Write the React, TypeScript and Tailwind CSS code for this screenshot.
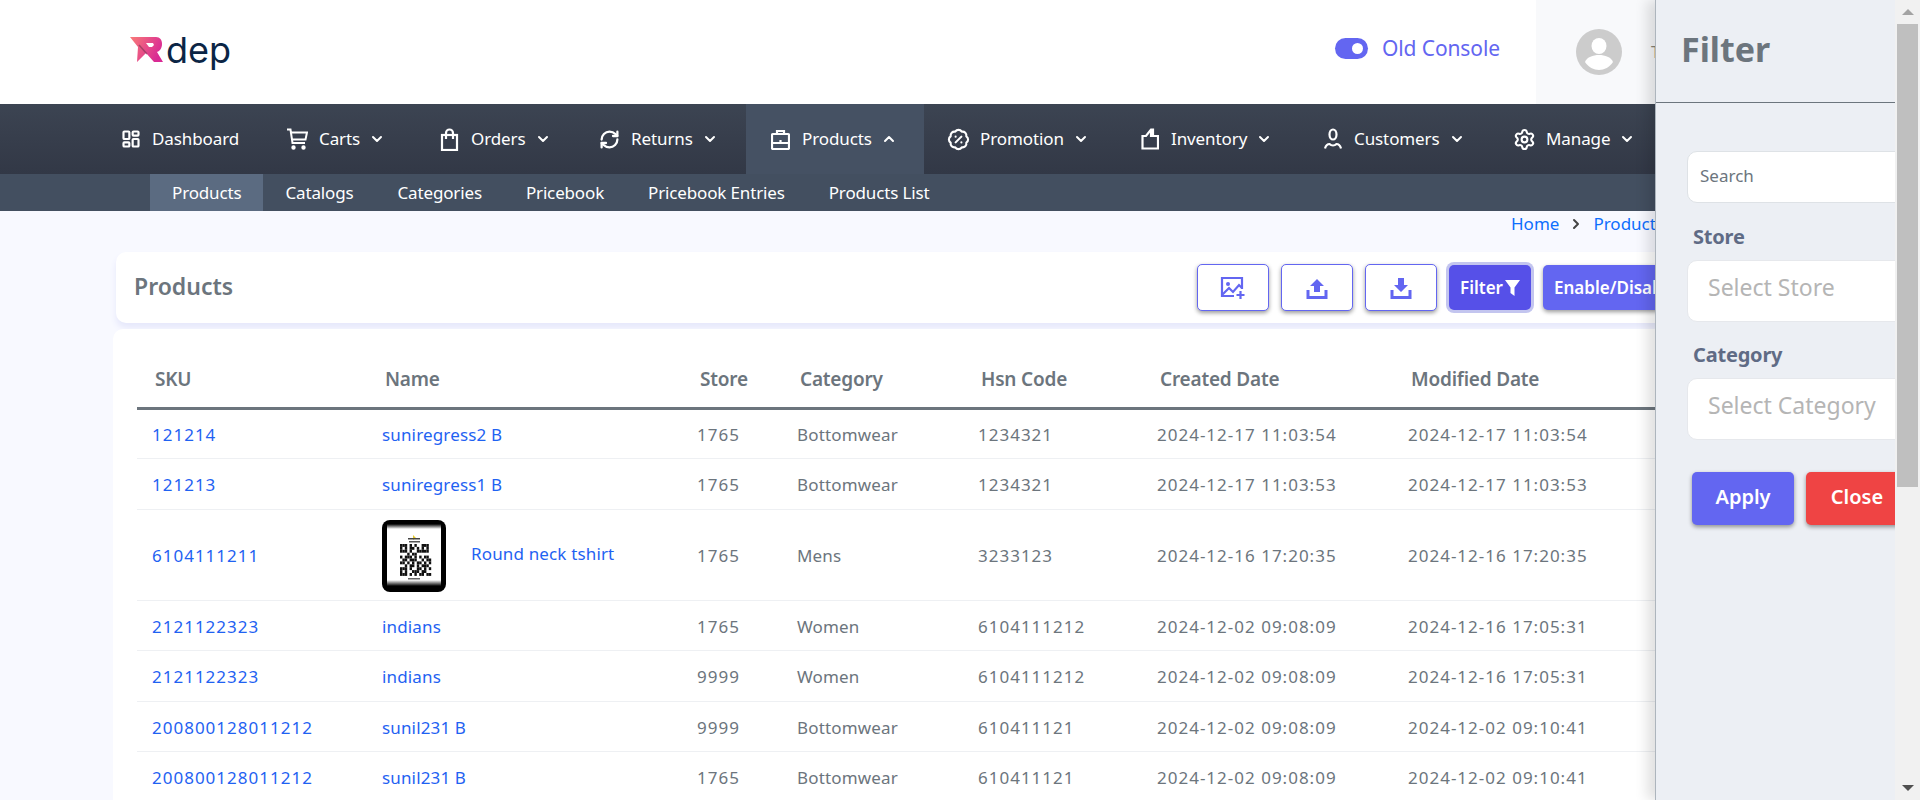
import { BadgePercent, ChevronDown, ChevronRight, ChevronUp, LayoutDashboard, RefreshCw, Settings } from "lucide-react";
import type { ReactNode } from "react";

const CartIcon = () => (
  <svg width="21" height="22" viewBox="0 0 21 22" fill="none" stroke="currentColor" strokeWidth="2">
    <path d="M0 1.500h3.500l2 13.500h12.500" />
    <path d="M4 4.500h16l-1.500 7H5" />
    <circle cx="6.500" cy="19.500" r="1.200" fill="currentColor" />
    <circle cx="16.500" cy="19.500" r="1.200" fill="currentColor" />
  </svg>
);

const BagIcon = () => (
  <svg width="19" height="23" viewBox="0 0 19 23" fill="none" stroke="currentColor" strokeWidth="2.200">
    <rect x="2" y="7" width="15" height="15" />
    <path d="M6 11V5a3.500 3.500 0 0 1 7 0v6" />
  </svg>
);

const CaseIcon = () => (
  <svg width="19" height="21" viewBox="0 0 19 21" fill="none" stroke="currentColor" strokeWidth="2.200">
    <rect x="1" y="5" width="17" height="15" rx="1" />
    <path d="M6 5V2h7v3M1 14h17M9.500 11v2" />
  </svg>
);

const InventoryIcon = () => (
  <svg width="18" height="22" viewBox="0 0 18 22" fill="none" stroke="currentColor" strokeWidth="2.200">
    <path d="M1.500 20.500V8h3.500l5-6.500 2 0V8h5v12.500z" />
    <path d="M10 2v7" />
  </svg>
);

const UserIcon = () => (
  <svg width="18" height="22" viewBox="0 0 18 22" fill="none" stroke="currentColor" strokeWidth="2.200">
    <ellipse cx="9" cy="6.500" rx="3.500" ry="5" />
    <path d="M1 20.500c1-3.500 3-4.500 4.500-4.500 1 1 2 1.500 3.500 1.500s2.500-.5 3.500-1.500c1.500 0 3.500 1 4.500 4.500" />
  </svg>
);

const ImageAddIcon = () => (
  <svg width="26" height="24" viewBox="0 0 26 24" fill="none" stroke="#6366f1" strokeWidth="2.200">
    <path d="M14 20H2V2h20v11" />
    <circle cx="8" cy="8" r="2" fill="#6366f1" stroke="none" />
    <path d="M2 19l7-7 4 4 6-7 3 3" />
    <path d="M20.500 15v8M16.500 19h8" />
  </svg>
);

const UploadIcon = () => (
  <svg width="24" height="24" viewBox="0 0 24 24" fill="#6366f1">
    <path d="M12 3l7 7h-4v6H9v-6H5z" />
    <path d="M1.500 14h3v6h15v-6h3v9h-21z" />
  </svg>
);

const DownloadIcon = () => (
  <svg width="24" height="24" viewBox="0 0 24 24" fill="#6366f1">
    <path d="M9 2h6v7h4l-7 7-7-7h4z" />
    <path d="M1.500 14h3v6h15v-6h3v9h-21z" />
  </svg>
);

const FunnelIcon = () => (
  <svg width="15" height="16" viewBox="0 0 15 16" fill="#fff">
    <path d="M0 0h15L9.500 7.500V16L5.500 13V7.500z" />
  </svg>
);

const navItems: { label: string; icon: ReactNode; width: string; chevron?: boolean; active?: boolean }[] = [
  { label: "Dashboard", icon: <LayoutDashboard size={20} strokeWidth={2.6} />, width: "w-[167px]" },
  { label: "Carts", icon: <CartIcon />, width: "w-[152px]", chevron: true },
  { label: "Orders", icon: <BagIcon />, width: "w-[160px]", chevron: true },
  { label: "Returns", icon: <RefreshCw size={21} strokeWidth={2.6} />, width: "w-[171px]", chevron: true },
  { label: "Products", icon: <CaseIcon />, width: "w-[178px]", chevron: true, active: true },
  { label: "Promotion", icon: <BadgePercent size={23} strokeWidth={2.2} />, width: "w-[191px]", chevron: true },
  { label: "Inventory", icon: <InventoryIcon />, width: "w-[183px]", chevron: true },
  { label: "Customers", icon: <UserIcon />, width: "w-[192px]", chevron: true },
  { label: "Manage", icon: <Settings size={23} strokeWidth={2.2} />, width: "w-[192px]", chevron: true },
];

const subItems = ["Products", "Catalogs", "Categories", "Pricebook", "Pricebook Entries", "Products List"];

type Row = { sku: string; name: string; store: string; category: string; hsn: string; created: string; modified: string; image?: boolean };

const rows: Row[] = [
  { sku: "121214", name: "suniregress2 B", store: "1765", category: "Bottomwear", hsn: "1234321", created: "2024-12-17 11:03:54", modified: "2024-12-17 11:03:54" },
  { sku: "121213", name: "suniregress1 B", store: "1765", category: "Bottomwear", hsn: "1234321", created: "2024-12-17 11:03:53", modified: "2024-12-17 11:03:53" },
  { sku: "6104111211", name: "Round neck tshirt", store: "1765", category: "Mens", hsn: "3233123", created: "2024-12-16 17:20:35", modified: "2024-12-16 17:20:35", image: true },
  { sku: "2121122323", name: "indians", store: "1765", category: "Women", hsn: "6104111212", created: "2024-12-02 09:08:09", modified: "2024-12-16 17:05:31" },
  { sku: "2121122323", name: "indians", store: "9999", category: "Women", hsn: "6104111212", created: "2024-12-02 09:08:09", modified: "2024-12-16 17:05:31" },
  { sku: "200800128011212", name: "sunil231 B", store: "9999", category: "Bottomwear", hsn: "610411121", created: "2024-12-02 09:08:09", modified: "2024-12-02 09:10:41" },
  { sku: "200800128011212", name: "sunil231 B", store: "1765", category: "Bottomwear", hsn: "610411121", created: "2024-12-02 09:08:09", modified: "2024-12-02 09:10:41" },
];

const qrCells = [
  "1110101001110", "1010110101010", "1110100111110", "0001011000000", "1011101010110", "0110111001011",
  "1101010110101", "0010110101110", "1110100110101", "1010011101100", "1110101011011",
];

const QrThumb = () => (
  <svg width="64" height="72" viewBox="0 0 64 72" className="shrink-0">
    <defs>
      <linearGradient id="qrTop" x1="0" y1="0" x2="0" y2="1">
        <stop offset="0" stopColor="#000" />
        <stop offset="1" stopColor="#fff" />
      </linearGradient>
      <linearGradient id="qrBottom" x1="0" y1="1" x2="0" y2="0">
        <stop offset="0" stopColor="#000" />
        <stop offset="1" stopColor="#fff" />
      </linearGradient>
    </defs>
    <rect width="64" height="72" rx="8" fill="#000" />
    <rect x="5" y="4" width="54" height="62" fill="#fff" />
    <rect x="5" y="4" width="54" height="5" fill="url(#qrTop)" />
    <rect x="5" y="60" width="54" height="6" fill="url(#qrBottom)" />
    <path d="M31 15l3 3-3 2z" fill="#e5c92b" />
    <rect x="26" y="18" width="12" height="1.500" fill="#444" />
    <rect x="27" y="21" width="11" height="1.500" fill="#555" />
    {qrCells.map((line, y) =>
      line.split("").map((cell, x) =>
        cell === "1" ? <rect key={`${x}-${y}`} x={18 + x * 2.4} y={24 + y * 2.9} width="2.4" height="2.9" fill="#111" /> : null
      )
    )}
    <rect x="26" y="58" width="12" height="1.500" fill="#666" />
  </svg>
);

const headCell = "pl-[18px] pb-[13px] text-left text-[19px] font-semibold tracking-[-0.2px] text-[#6c757d]";
const bodyCell = "pl-[15px] pt-[2px] text-[17px] tracking-[0.15px] text-[#6c757d]";
const digits = "pl-[15px] pt-[2px] text-[17px] tracking-[1px] text-[#6c757d]";
const link = "text-[#1f62f2]";

export default function App() {
  return (
    <div className="flex h-[800px] overflow-hidden bg-[#f8f9ff] font-['Noto_Sans',sans-serif]">
      <div className="relative w-[1895px] shrink-0 overflow-hidden">
        <header className="flex h-[104px] items-center bg-white pl-[130px]">
          <div className="mt-[-5px] flex items-center">
            <svg width="36" height="28" viewBox="0 0 36 28">
              <defs>
                <linearGradient id="logoGrad" x1="0" y1="0" x2="1" y2="0.4">
                  <stop offset="0" stopColor="#f97b78" />
                  <stop offset="1" stopColor="#d92a94" />
                </linearGradient>
              </defs>
              <path d="M0 1h26c4 0 6 3 6 7s-2 7-5 8l6 10h-9l-8-9-9 9 1-15z" fill="url(#logoGrad)" />
              <path d="M16 7h7l1 2-2 2h-3z" fill="#fff" />
              <path d="M9 9l8 9" stroke="#8a3a5c" strokeWidth="1.500" opacity="0.7" />
            </svg>
            <span className="font-['Inter',sans-serif] text-[36px] leading-none text-[#0b2545]">dep</span>
          </div>
          <div className="ml-auto mt-[-7px] flex items-center">
            <span className="relative block h-[21px] w-[33px] rounded-full bg-[#6366f1]">
              <span className="absolute right-[5px] top-[5px] h-[11px] w-[11px] rounded-full bg-white" />
            </span>
            <span className="ml-[14px] text-[21px] tracking-[-0.1px] text-[#6366f1]">Old Console</span>
          </div>
          <div className="ml-[36px] flex h-full w-[359px] items-center bg-[#f8f9fb] pl-[40px]">
            <svg width="46" height="46" viewBox="0 0 46 46">
              <ellipse cx="23" cy="23" rx="23" ry="23" fill="#cccccc" />
              <ellipse cx="23" cy="17" rx="7.500" ry="8" fill="#fff" />
              <path d="M9 33c2-5 8-7 14-7s12 2 14 7c-3 5-9 8-14 8s-11-3-14-8z" fill="#fff" />
            </svg>
            <span className="ml-[29px] text-[16px] text-[#8a8578]">T</span>
          </div>
        </header>

        <nav className="flex h-[70px] items-stretch bg-gradient-to-b from-[#3c4452] to-[#323846] pl-[96px] text-white">
          {navItems.map((item) => (
            <div
              key={item.label}
              className={`flex shrink-0 items-center pl-[25px] ${item.width} ${item.active ? "bg-[#455163]" : ""}`}
            >
              <span className="flex w-[19px] shrink-0 justify-center [&>svg]:shrink-0">{item.icon}</span>
              <span className="ml-[12px] text-[17px] tracking-[-0.1px]">{item.label}</span>
              {item.chevron &&
                (item.active ? (
                  <ChevronUp size={16} strokeWidth={3} className="ml-[9px]" />
                ) : (
                  <ChevronDown size={16} strokeWidth={3} className="ml-[9px]" />
                ))}
            </div>
          ))}
        </nav>

        <div className="flex h-[37px] items-stretch bg-[#434f60] pl-[150px] text-[17px] tracking-[-0.15px] text-white">
          {subItems.map((label, i) => (
            <div key={i} className={`flex items-center px-[22px] ${i === 0 ? "bg-[#5b6b81]" : ""}`}>
              {label}
            </div>
          ))}
        </div>

        <div className="flex h-[41px] items-center pb-[16px] pl-[1511px] text-[17px] text-[#0d6efd]">
          <span>Home</span>
          <ChevronRight size={16} strokeWidth={3} className="mx-[9px] text-[#444]" />
          <span>Products</span>
        </div>

        <div className="ml-[116px] flex h-[71px] w-[1688px] items-center justify-between rounded-[10px] bg-white pl-[18px] pr-[91px] shadow-[0_5px_6px_#e6e8fb]">
          <h1 className="mt-[-2px] text-[23px] font-semibold text-[#6c757d]">Products</h1>
          <div className="flex items-center gap-[12px]">
            {[<ImageAddIcon key="a" />, <UploadIcon key="b" />, <DownloadIcon key="c" />].map((icon, i) => (
              <button
                key={i}
                className="flex h-[47px] w-[72px] items-center justify-center rounded-[5px] border border-[#6366f1] bg-white shadow-[0_2px_4px_rgba(0,0,0,0.4)]"
              >
                {icon}
              </button>
            ))}
            <button className="flex h-[45px] w-[82px] items-center justify-center gap-[2px] rounded-[5px] bg-[#5650e8] text-[17px] font-semibold text-white shadow-[0_0_0_3px_#c3c5ef]">
              Filter
              <FunnelIcon />
            </button>
            <button className="h-[45px] w-[170px] rounded-[5px] bg-[#6366f1] pl-[11px] text-left text-[17px] font-semibold text-white shadow-[0_2px_4px_rgba(0,0,0,0.4)]">
              Enable/Disable
            </button>
          </div>
        </div>

        <div className="ml-[113px] mt-[6px] w-[1700px] rounded-t-[10px] bg-white px-[24px] pt-[36px]">
          <table className="w-[1660px] table-fixed border-collapse">
            <thead>
              <tr className="border-b-[3px] border-[#6c757d]">
                <th className={`${headCell} w-[230px]`}>SKU</th>
                <th className={`${headCell} w-[315px]`}>Name</th>
                <th className={`${headCell} w-[100px]`}>Store</th>
                <th className={`${headCell} w-[181px]`}>Category</th>
                <th className={`${headCell} w-[179px]`}>Hsn Code</th>
                <th className={`${headCell} w-[251px]`}>Created Date</th>
                <th className={headCell}>Modified Date</th>
              </tr>
            </thead>
            <tbody>
              {rows.map((r, i) => (
                <tr key={i} className="border-b border-[#eef0f3]">
                  <td className={`${digits} ${r.image ? "h-[91px]" : "h-[50.5px]"}`}>
                    <span className={link}>{r.sku}</span>
                  </td>
                  <td className={bodyCell}>
                    {r.image ? (
                      <div className="flex items-center gap-[25px]">
                        <QrThumb />
                        <span className={`${link} mt-[-3px]`}>{r.name}</span>
                      </div>
                    ) : (
                      <span className={link}>{r.name}</span>
                    )}
                  </td>
                  <td className={digits}>{r.store}</td>
                  <td className={bodyCell}>{r.category}</td>
                  <td className={digits}>{r.hsn}</td>
                  <td className={digits}>{r.created}</td>
                  <td className={digits}>{r.modified}</td>
                </tr>
              ))}
            </tbody>
          </table>
        </div>

        <aside className="absolute inset-y-0 right-0 w-[240px] overflow-hidden border-l border-[#adb5bd] bg-[#eceff4] shadow-[-8px_0_12px_rgba(0,0,0,0.12)]">
          <div className="flex h-[103px] items-start border-b border-[#6c757d] pl-[25px] pt-[24px]">
            <h2 className="text-[34px] font-bold leading-[50px] text-[#6c757d]">Filter</h2>
          </div>
          <div className="w-[300px] pl-[31px] pt-[48px]">
            <div className="flex h-[52px] items-center rounded-[10px] border border-[#dee2e6] bg-white pb-[2px] pl-[12px] text-[17px] text-[#6c757d]">Search</div>
            <div className="pl-[6px] pt-[14px] pb-[4px] text-[20px] font-bold leading-[39px] tracking-[-0.2px] text-[#5f6b85]">Store</div>
            <div className="flex h-[62px] items-center rounded-[10px] border border-[#e6e8ec] bg-white pb-[8px] pl-[20px] text-[23px] text-[#b5b5b5]">Select Store</div>
            <div className="pl-[6px] pt-[13px] pb-[4px] text-[20px] font-bold leading-[39px] tracking-[-0.2px] text-[#5f6b85]">Category</div>
            <div className="flex h-[62px] items-center rounded-[10px] border border-[#e6e8ec] bg-white pb-[8px] pl-[20px] text-[23px] text-[#b5b5b5]">Select Category</div>
            <div className="mt-[32px] flex gap-[12px] pl-[5px]">
              <button className="h-[53px] w-[102px] rounded-[5px] bg-[#6366f1] pb-[3px] text-[20px] font-semibold text-white shadow-[0_2px_4px_rgba(0,0,0,0.4)]">Apply</button>
              <button className="h-[53px] w-[102px] rounded-[5px] bg-[#ef4444] pb-[3px] text-[20px] font-semibold text-white shadow-[0_2px_4px_rgba(0,0,0,0.4)]">Close</button>
            </div>
          </div>
        </aside>
      </div>

      <div className="flex w-[25px] shrink-0 flex-col items-center bg-[#f1f1f1]">
        <div className="flex h-[24px] items-center justify-center">
          <span className="h-0 w-0 border-x-[6px] border-b-[6px] border-x-transparent border-b-[#a3a3a3]" />
        </div>
        <div className="h-[463px] w-[21px] bg-[#bfbfbf]" />
        <div className="mt-auto flex h-[24px] items-center justify-center">
          <span className="h-0 w-0 border-x-[6px] border-t-[6px] border-x-transparent border-t-[#505050]" />
        </div>
      </div>
    </div>
  );
}
